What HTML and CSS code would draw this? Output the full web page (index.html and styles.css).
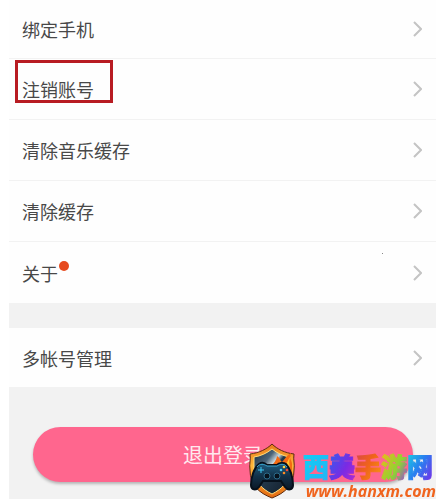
FILE: index.html
```
<!DOCTYPE html>
<html lang="zh-CN">
<head>
  <meta charset="UTF-8" />
  <meta name="viewport" content="width=device-width, initial-scale=1.0" />
  <title>设置</title>
  <link rel="stylesheet" href="styles.css">
</head>
<body>
  <main class="settings">
    <nav class="menu">
      <a class="row" href="#phone">
        <span>绑定手机</span>
        <svg class="arrow" viewBox="0 0 9 16"><path d="M1 1l7 7-7 7" /></svg>
      </a>
      <a class="row marked" href="#cancel">
        <span>注销账号</span>
        <svg class="arrow" viewBox="0 0 9 16"><path d="M1 1l7 7-7 7" /></svg>
      </a>
      <a class="row" href="#music-cache">
        <span>清除音乐缓存</span>
        <svg class="arrow" viewBox="0 0 9 16"><path d="M1 1l7 7-7 7" /></svg>
      </a>
      <a class="row" href="#cache">
        <span>清除缓存</span>
        <svg class="arrow" viewBox="0 0 9 16"><path d="M1 1l7 7-7 7" /></svg>
      </a>
      <a class="row speck" href="#about">
        <span class="new">关于</span>
        <svg class="arrow" viewBox="0 0 9 16"><path d="M1 1l7 7-7 7" /></svg>
      </a>
    </nav>

    <nav class="menu">
      <a class="row" href="#accounts">
        <span>多帐号管理</span>
        <svg class="arrow" viewBox="0 0 9 16"><path d="M1 1l7 7-7 7" /></svg>
      </a>
    </nav>

    <div class="footer">
      <button type="button" class="btn-logout">退出登录</button>
    </div>
  </main>

  <div class="watermark">
    <svg class="logo" viewBox="0 0 46 56">
      <defs>
        <linearGradient id="rim" x1="0" y1="0" x2="0" y2="1">
          <stop offset="0" stop-color="#e8791c" />
          <stop offset="0.4" stop-color="#ffb638" />
          <stop offset="1" stop-color="#e46a12" />
        </linearGradient>
        <linearGradient id="steel" x1="0" y1="0" x2="1" y2="1">
          <stop offset="0" stop-color="#182b3c" />
          <stop offset="0.3" stop-color="#4a6478" />
          <stop offset="0.42" stop-color="#c9d7dd" />
          <stop offset="0.5" stop-color="#23384a" />
          <stop offset="1" stop-color="#101b28" />
        </linearGradient>
        <linearGradient id="pad" x1="0" y1="0" x2="0" y2="1">
          <stop offset="0" stop-color="#1f5f83" />
          <stop offset="0.5" stop-color="#123149" />
          <stop offset="1" stop-color="#0b1826" />
        </linearGradient>
      </defs>
      <path fill="url(#rim)" stroke="#5b2a10" d="M23 1C18 6 10 10 1 11C2 17 0 21 1 27C1 42 10 50 23 55C36 50 45 42 45 27C46 21 44 17 45 11C36 10 28 6 23 1Z" />
      <path fill="url(#steel)" stroke="#ffdc7c" d="M23 6C18 10 12 13 5 14V28C6 39 13 46 23 51C33 46 40 39 41 28V14C34 13 28 10 23 6Z" />
      <path fill="#f46a12" d="M22 24C25 19 27 19 28 13C32 16 31 18 33 19C36 16 37 13 42 10C40 17 44 18 43 24V32H25Z" />
      <path fill="#ffc02e" d="M26 25C29 21 30 22 31 18C34 21 33 23 36 22C38 20 39 17 41 14C39 22 42 24 41 30H28Z" />
      <path fill="url(#pad)" stroke="#06101b" stroke-width="2" d="M10 21C13 19 16 20 18 22H28C30 20 34 19 37 21C41 25 44 34 44 42C44 47 39 48 36 44L32 38H14L10 44C7 48 2 47 2 42C2 34 5 25 10 21Z" />
      <path fill="none" stroke="#3aa6cf" d="M8 24C11 20 15 21 18 23H28C31 21 35 20 38 24" />
      <path stroke="#3fc8f4" d="M12 24V30M9 27H15" />
      <circle cx="18" cy="33" r="3" fill="#07121d" stroke="#2c6b8a" />
      <circle cx="28" cy="33" r="3" fill="#07121d" stroke="#2c6b8a" />
      <circle cx="35" cy="24" r="1.3" fill="#ffd33d" />
      <circle cx="32" cy="27" r="1.3" fill="#48cdf4" />
      <circle cx="38" cy="27" r="1.3" fill="#f34832" />
      <circle cx="35" cy="30" r="1.3" fill="#ff8c24" />
    </svg>
    <div class="brand">
      <div class="brand-name"><span class="c1">西</span><span class="c2">美</span><span class="c3">手</span><span class="c4">游</span><span class="c5">网</span></div>
      <div class="brand-url">www.hanxm.com</div>
    </div>
  </div>
</body>
</html>
```

FILE: styles.css
```
body {
  margin: 0;
  background-color: #fff;
  font-family: "Noto Sans CJK SC", sans-serif;
}

.settings {
  margin: 0 4px 0 9px;
  min-height: 100vh;
  background-color: #f2f2f2;
}

.menu {
  background-color: #fefefe;
  margin-bottom: 25px;
}

.row {
  display: flex;
  align-items: center;
  justify-content: space-between;
  position: relative;
  box-sizing: border-box;
  height: 61px;
  padding: 0 14px 0 13px;
  border-bottom: 1px solid #f2f2f2;
  color: #484848;
  font-size: 18px;
  line-height: 26px;
  text-decoration: none;
}

.row:first-child {
  height: 59px;
}

.row:last-child {
  border-bottom: none;
}

.arrow {
  width: 9px;
  height: 16px;
  fill: none;
  stroke: #c4c4c4;
  stroke-width: 2;
}

.marked::before {
  content: "";
  position: absolute;
  top: 1px;
  left: 6px;
  width: 92px;
  height: 37px;
  border: 3px solid #b81c22;
}

.new {
  position: relative;
}

.new::after {
  content: "";
  position: absolute;
  top: 1px;
  left: 37px;
  width: 10px;
  height: 10px;
  border-radius: 50%;
  background-color: #e64a1e;
}

.speck::after {
  content: "";
  position: absolute;
  top: 11px;
  right: 53px;
  width: 1px;
  height: 1px;
  background-color: #888;
}

.footer {
  padding: 15px 23px 16px 24px;
}

.btn-logout {
  display: block;
  width: 100%;
  height: 55px;
  padding: 0;
  border: none;
  border-radius: 28px;
  background-color: #ff668e;
  box-shadow: 0 2px 3px rgba(0, 0, 0, 0.25);
  color: #ffe9ef;
  font-family: inherit;
  font-size: 20px;
  cursor: pointer;
}

.watermark {
  position: fixed;
  right: 4px;
  bottom: 0;
  display: flex;
  align-items: flex-end;
  gap: 8px;
}

.logo {
  width: 46px;
  height: 56px;
}

.brand-name {
  display: flex;
  padding: 0 3px 2px 0;
  font-size: 26px;
  line-height: 30px;
  font-weight: 900;
}

.brand-name span {
  background-clip: text;
  -webkit-background-clip: text;
  color: transparent;
  -webkit-text-stroke: 1px transparent;
}

.brand-name .c1 {
  background-image: linear-gradient(120deg, #10d0f4, #22b4f6);
}

.brand-name .c2 {
  background-image: linear-gradient(120deg, #2a62f0, #7a2ae4 60%, #b02ad0);
}

.brand-name .c3 {
  background-image: linear-gradient(120deg, #d8444a, #f0641a 50%, #f59a12);
}

.brand-name .c4 {
  background-image: linear-gradient(120deg, #f4b818, #8cd432 60%, #9a40e0);
}

.brand-name .c5 {
  background-image: linear-gradient(120deg, #18d4e0, #2a7cf0 50%, #7a2ae8);
}

.brand-url {
  color: #f0641e;
  font-family: "Open Sans", sans-serif;
  font-size: 16px;
  line-height: 16px;
  font-style: italic;
  font-weight: 700;
  text-align: right;
}
```
